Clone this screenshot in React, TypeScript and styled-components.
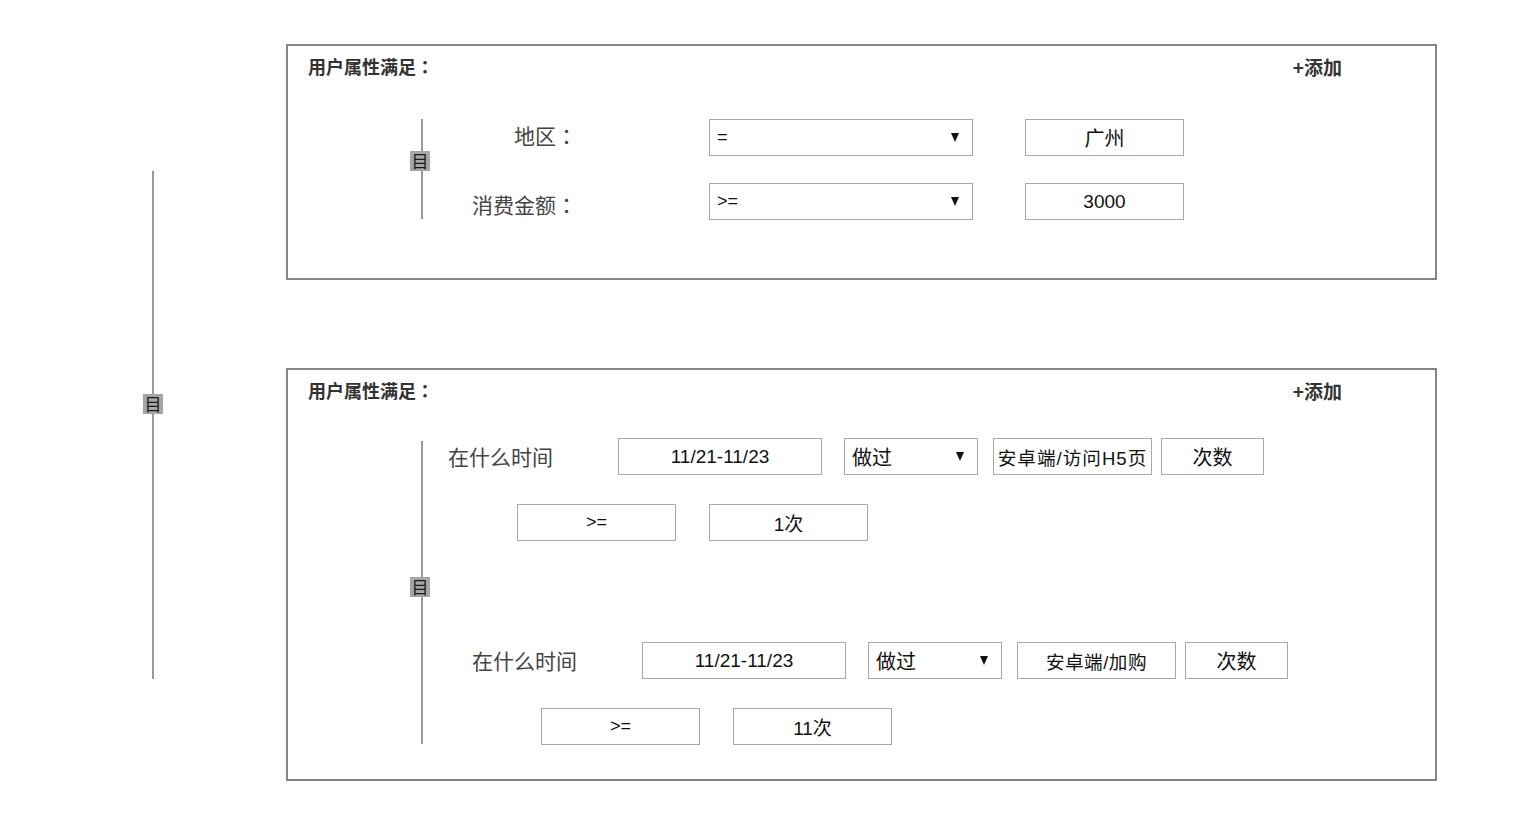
import styled, { createGlobalStyle } from "styled-components";

const GlobalStyle = createGlobalStyle`
    body {
        margin: 0;
        background: #fff;
        font-family: "Liberation Sans", "Noto Sans CJK SC", sans-serif;
        color: #333;
    }
`;

const Page = styled.div`
    display: flex;
    align-items: flex-start;
    padding: 44px 0 0 143px;
`;

const Bracket = styled.div<{ $top?: number }>`
    display: flex;
    flex-direction: column;
    align-items: center;
    width: 20px;
    flex-shrink: 0;
    margin-top: ${(p) => p.$top || 0}px;
`;

const Line = styled.div<{ $h: number; $shift?: number }>`
    width: 2px;
    height: ${(p) => p.$h}px;
    background: #9a9a9a;
    margin-left: ${(p) => p.$shift || 0}px;
`;

const Knot = styled.div`
    width: 20px;
    height: 20px;
    background: #a6a6a6;
    color: #1a1a1a;
    font-size: 17px;
    line-height: 20px;
    text-align: center;
    font-family: "Noto Sans CJK SC", sans-serif;
`;

const Boxes = styled.div`
    display: flex;
    flex-direction: column;
    gap: 88px;
    margin-left: 123px;
    width: 1151px;
`;

const Panel = styled.div<{ $pb: number }>`
    border: 2px solid #858585;
    padding-bottom: ${(p) => p.$pb}px;
`;

const Header = styled.div`
    box-sizing: border-box;
    display: flex;
    justify-content: space-between;
    align-items: center;
    height: 44px;
    padding: 0 93px 4px 20px;
    font-family: "Noto Sans CJK SC", sans-serif;
    font-weight: bold;
    color: #333;
`;

const Title = styled.span`
    font-size: 18px;
`;

const AddLink = styled.span`
    font-size: 19px;
    cursor: pointer;
`;

const Colon = styled.span`
    font-family: "Noto Sans CJK JP", sans-serif;
`;

const Body = styled.div<{ $mt: number }>`
    display: flex;
    align-items: flex-start;
    padding-left: 122px;
    margin-top: ${(p) => p.$mt}px;
`;

const Rows = styled.div<{ $gap: number }>`
    display: flex;
    flex-direction: column;
    gap: ${(p) => p.$gap}px;
`;

const Row = styled.div<{ $indent?: number }>`
    display: flex;
    align-items: center;
    margin-left: ${(p) => p.$indent || 0}px;
`;

const Label = styled.div<{ $w: number; $right?: boolean; $dy?: number }>`
    width: ${(p) => p.$w}px;
    font-family: "Noto Sans CJK SC", sans-serif;
    font-size: 21px;
    color: #444;
    text-align: ${(p) => (p.$right ? "right" : "left")};
    flex-shrink: 0;
    position: relative;
    top: ${(p) => p.$dy || 0}px;
`;

const Field = styled.div<{ $w: number; $mr?: number; $ml?: number; $size?: number; $spacing?: number }>`
    box-sizing: border-box;
    width: ${(p) => p.$w}px;
    height: 37px;
    margin-left: ${(p) => p.$ml || 0}px;
    margin-right: ${(p) => p.$mr || 0}px;
    border: 1px solid #a9a9a9;
    display: flex;
    align-items: center;
    justify-content: center;
    font-size: ${(p) => p.$size || 19}px;
    letter-spacing: ${(p) => p.$spacing || 0}px;
    color: #111;
    white-space: nowrap;
    flex-shrink: 0;
`;

const Select = styled(Field)`
    justify-content: space-between;
    padding: 0 13px 0 7px;
`;

const Arrow = styled.span`
    width: 0;
    height: 0;
    border-left: 4px solid transparent;
    border-right: 4px solid transparent;
    border-top: 9px solid #111;
`;

const Group = styled.div<{ $indent: number }>`
    display: flex;
    flex-direction: column;
    gap: 29px;
    margin-left: ${(p) => p.$indent}px;
`;

const groups = [
    { indent: 18, action: "安卓端/访问H5页", spacing: 1, count: "1次" },
    { indent: 42, action: "安卓端/加购", spacing: 0.5, count: "11次" },
];

const PanelHeader = () => (
    <Header>
        <Title>用户属性满足<Colon>：</Colon></Title>
        <AddLink>+添加</AddLink>
    </Header>
);

const App = () => {
    return (
        <>
            <GlobalStyle />
            <Page>
                <Bracket $top={127}>
                    <Line $h={223} />
                    <Knot>目</Knot>
                    <Line $h={265} />
                </Bracket>
                <Boxes>
                    <Panel $pb={58}>
                        <PanelHeader />
                        <Body $mt={29}>
                            <Bracket>
                                <Line $h={32} $shift={3} />
                                <Knot>目</Knot>
                                <Line $h={48} $shift={3} />
                            </Bracket>
                            <Rows $gap={27}>
                                <Row>
                                    <Label $w={147} $right $dy={-3}>地区<Colon>：</Colon></Label>
                                    <Select $w={264} $ml={132} $size={18}>
                                        <span>=</span>
                                        <Arrow />
                                    </Select>
                                    <Field $w={159} $ml={52} $size={20}>广州</Field>
                                </Row>
                                <Row>
                                    <Label $w={147} $right $dy={2}>消费金额<Colon>：</Colon></Label>
                                    <Select $w={264} $ml={132} $size={18}>
                                        <span>&gt;=</span>
                                        <Arrow />
                                    </Select>
                                    <Field $w={159} $ml={52}>3000</Field>
                                </Row>
                            </Rows>
                        </Body>
                    </Panel>
                    <Panel $pb={34}>
                        <PanelHeader />
                        <Body $mt={24}>
                            <Bracket $top={3}>
                                <Line $h={136} $shift={3} />
                                <Knot>目</Knot>
                                <Line $h={147} $shift={3} />
                            </Bracket>
                            <Rows $gap={101}>
                                {groups.map((g) => (
                                    <Group key={g.action} $indent={g.indent}>
                                        <Row>
                                            <Label $w={170} $dy={-1}>在什么时间</Label>
                                            <Field $w={204} $mr={22}>11/21-11/23</Field>
                                            <Select $w={134} $mr={15} $size={20}>
                                                <span>做过</span>
                                                <Arrow />
                                            </Select>
                                            <Field $w={159} $mr={9} $size={18.6} $spacing={g.spacing}>{g.action}</Field>
                                            <Field $w={103} $size={20}>次数</Field>
                                        </Row>
                                        <Row $indent={69}>
                                            <Field $w={159} $mr={33} $size={18}>&gt;=</Field>
                                            <Field $w={159}>{g.count}</Field>
                                        </Row>
                                    </Group>
                                ))}
                            </Rows>
                        </Body>
                    </Panel>
                </Boxes>
            </Page>
        </>
    );
};

export default App;
